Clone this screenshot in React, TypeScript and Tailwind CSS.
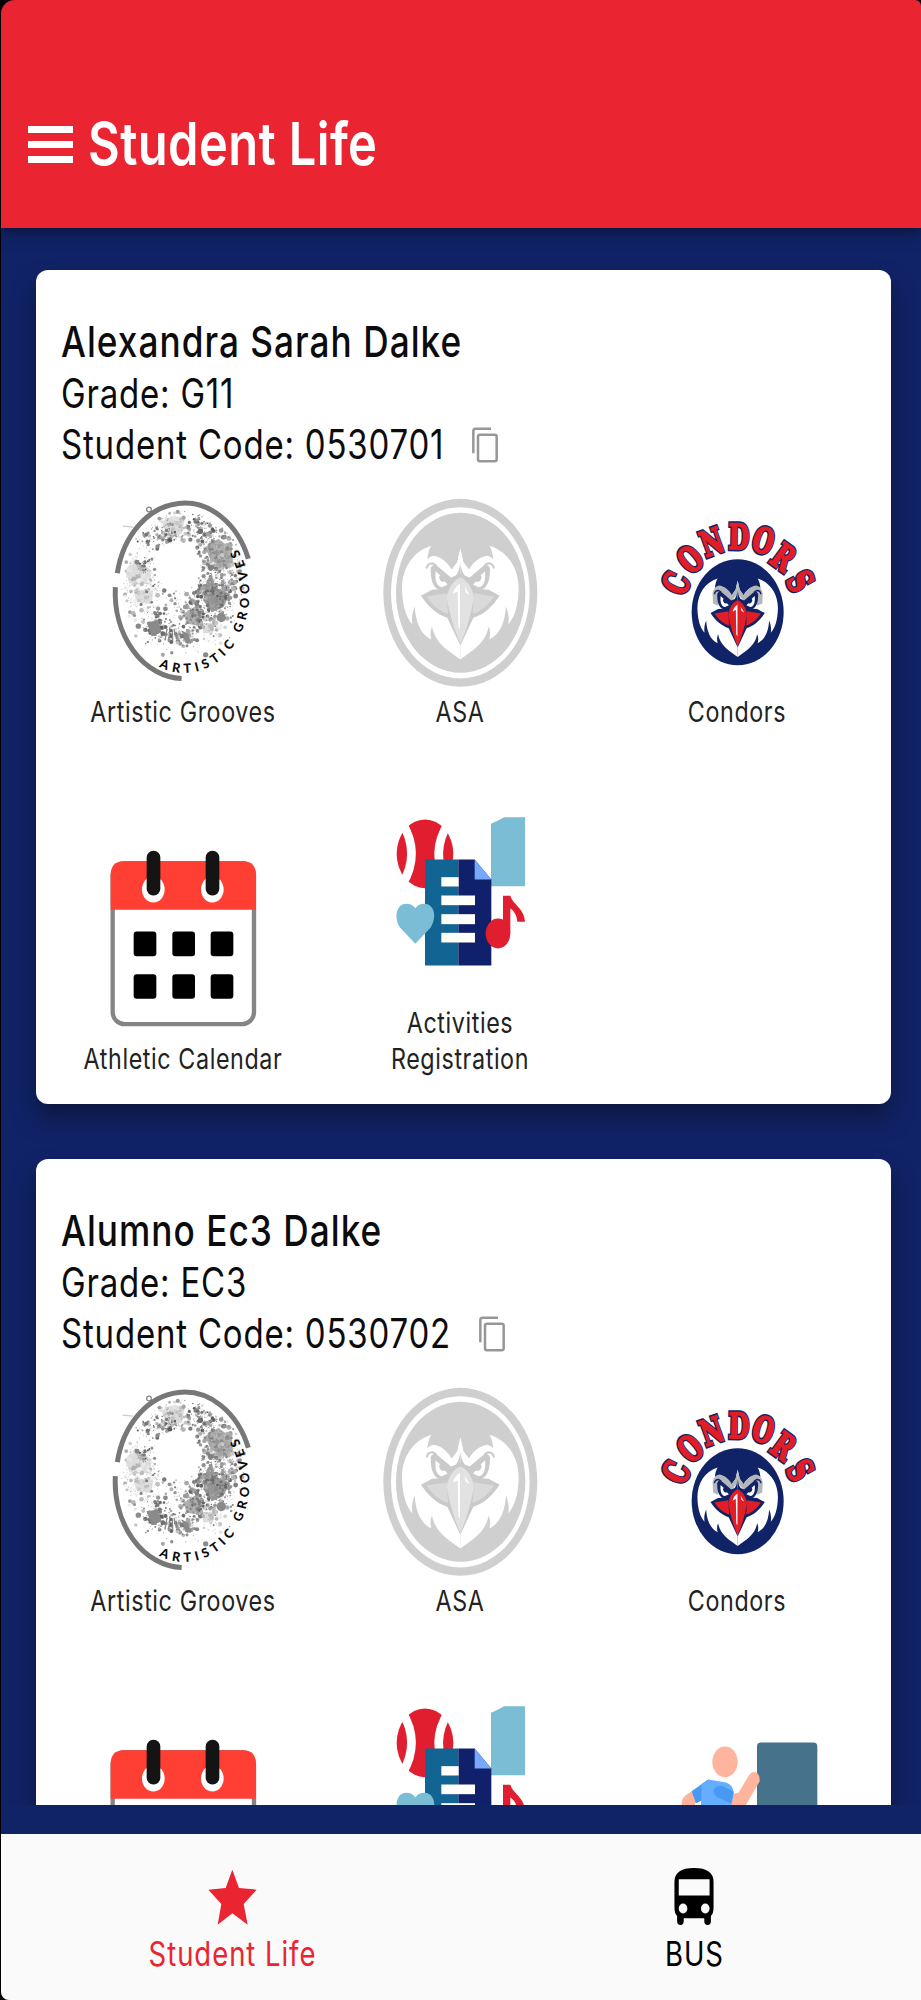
import React from 'react';

interface Activity {
  label: string[];
  icon: React.FC;
}

interface Student {
  name: string;
  grade: string;
  code: string;
  activities: Activity[];
}

interface CondorHeadProps {
  dark: string;
  brow: string;
  beak: string;
  beakSide: string;
}

const FACE_HALF =
  'M271 204 L262 245 L245 268 C232 245 212 228 190 232 L172 236 C174 222 176 208 184 196 C130 212 96 262 96 325 C97 375 108 410 127 432 C124 412 127 395 134 378 C137 425 152 462 184 477 C180 462 181 450 186 438 C196 490 235 510 271 537 Z';
const BROW_HALF = 'M271 204 L262 245 L245 268 C232 245 212 228 190 226 C174 230 164 244 162 262 L164 304 L186 314 L190 262 L243 296 L271 262 Z';
const EYE_HALF =
  'M182 264 C186 252 194 250 204 258 L243 291 L258 285 C266 274 269 262 271 246 L271 302 L234 332 L206 328 C186 318 182 292 182 264 Z';

const CondorHead: React.FC<CondorHeadProps> = ({ dark, brow, beak, beakSide }) => {
  const half = (
    <>
      <path d={FACE_HALF} fill="#fff" />
      <path d={BROW_HALF} fill={brow} />
      <path d={EYE_HALF} fill={dark} />
      <path d="M170 264 Q172 248 188 248 L200 256" fill="none" stroke={dark} strokeWidth="6" />
      <path d="M197 272 C194 296 199 318 216 320 L233 312 L224 303 C215 307 209 300 207 290 L210 284 Z" fill="#fff" />
      <path d="M153 346 L186 328 L235 325 L271 280 V496 L232 412 C200 402 174 378 153 346 Z" fill={dark} />
      <path d="M170 348 L230 338 L234 400 C206 392 186 372 170 348 Z" fill={beakSide} />
      <path d="M271.5 290 C252 298 236 318 230 350 C238 400 256 458 271.5 491 Z" fill={beak} />
    </>
  );
  return (
    <g>
      {half}
      <g transform="translate(542 0) scale(-1 1)">{half}</g>
      <path d="M270 310 C262 315 252 325 249 340 L263 332 L265 440 L270 446 Z" fill="#fff" />
      <path d="M284 318 L299 344 L287 336 Z" fill="#fff" />
    </g>
  );
};

// Paint splatter of the Artistic Grooves logo, seeded so it is always the same
const splatter = (() => {
  let seed = 11;
  const rand = () => {
    seed = (seed * 16807) % 2147483647;
    return seed / 2147483647;
  };
  const clusters = [
    { x: 140, y: 290, s: 70, n: 220, tone: 205 },
    { x: 155, y: 370, s: 60, n: 120, tone: 215 },
    { x: 245, y: 140, s: 60, n: 220, tone: 185 },
    { x: 355, y: 440, s: 50, n: 110, tone: 200 },
    { x: 385, y: 215, s: 70, n: 330, tone: 145 },
    { x: 400, y: 270, s: 55, n: 150, tone: 165 },
    { x: 375, y: 345, s: 65, n: 330, tone: 125 },
    { x: 310, y: 400, s: 55, n: 200, tone: 130 },
    { x: 200, y: 440, s: 45, n: 110, tone: 125 },
    { x: 240, y: 460, s: 32, n: 60, tone: 120 },
    { x: 290, y: 475, s: 30, n: 60, tone: 140 },
    { x: 165, y: 255, s: 26, n: 40, tone: 110 },
    { x: 202, y: 318, s: 20, n: 25, tone: 130 },
    { x: 175, y: 170, s: 38, n: 70, tone: 120 },
    { x: 235, y: 170, s: 40, n: 70, tone: 120 },
    { x: 340, y: 145, s: 45, n: 100, tone: 120 },
    { x: 290, y: 330, s: 210, n: 330, tone: 150 },
  ];
  const dots: { x: number; y: number; r: number; c: string }[] = [];
  clusters.forEach(k => {
    for (let i = 0; i < k.n; i++) {
      const x = k.x + (rand() + rand() - 1) * k.s * 1.15;
      const y = k.y + (rand() + rand() - 1) * k.s * 1.15;
      const r = 1 + Math.pow(rand(), 4) * 6.5;
      const t = Math.min(240, Math.round(k.tone + (rand() - 0.4) * 80));
      const hole = Math.pow((x - 262) / 66, 2) + Math.pow((y - 255) / 76, 2) < 1;
      const inside = Math.pow((x - 283) / 190, 2) + Math.pow((y - 330) / 240, 2) < 1;
      if (!hole && inside) dots.push({ x, y, r, c: `rgb(${t},${t},${t})` });
    }
  });
  return dots;
})();

const ArtisticGroovesIcon: React.FC = () => (
  <svg className="size-[200px]" viewBox="-21 40.5 600 600">
    <g fill="#dedede">
      <path d="M215 125 Q245 95 285 115 L275 160 L235 175 Z" />
      <path d="M105 270 L135 235 L185 270 L180 310 L120 315 Z" />
      <path d="M130 330 L190 325 L185 370 L140 365 Z" />
      <path d="M335 430 L375 425 L370 455 L340 460 Z" />
    </g>
    <g fill="#b0b0b0">
      <path d="M345 200 L385 175 L425 205 L430 250 L395 265 L360 235 Z" />
      <path d="M280 400 L320 375 L338 400 L325 435 L290 430 Z" />
    </g>
    <path d="M350 300 L365 280 L375 320 L420 340 L400 380 L365 395 L340 360 Z" fill="#989898" />
    {splatter.map((d, i) => (
      <circle key={i} cx={d.x} cy={d.y} r={d.r} fill={d.c} />
    ))}
    <g fill="#8a8a8a">
      <path d="M170 425 L205 420 L215 455 L185 468 Z" />
      <path d="M275 450 L295 460 L303 490 L288 487 Z" />
      <circle cx="394" cy="411" r="14" />
      <circle cx="347" cy="523" r="8" />
      <circle cx="145" cy="437" r="8" />
    </g>
    <circle cx="177" cy="87" r="7" fill="none" stroke="#888" strokeWidth="4" />
    <path d="M98 137 L130 140" stroke="#ccc" strokeWidth="4" />
    <path d="M225 480 L231 445 M236 485 L240 440 M248 482 L247 447 M260 475 L252 445" stroke="#888" strokeWidth="4" />
    <path d="M82 278 A205 259 0 0 1 475 235" fill="none" stroke="#777" strokeWidth="15" />
    <path d="M76 320 A206 258 0 0 0 275 594" fill="none" stroke="#777" strokeWidth="15" />
    <path id="grooves-arc" d="M206.8 558.2 A195 237 0 0 0 436.7 194" fill="none" />
    <text className="font-['Lato'] font-black" fontSize="38" fill="#0b0b0b">
      <textPath href="#grooves-arc" textLength="560">
        ARTISTIC GROOVES
      </textPath>
    </text>
  </svg>
);

const AsaIcon: React.FC = () => (
  <svg className="size-[200px]" viewBox="-30 40.5 600 600">
    <ellipse cx="271" cy="337" rx="231" ry="282" fill="#cfcfcf" />
    <ellipse cx="271" cy="337" rx="208" ry="257" fill="#fff" />
    <ellipse cx="272" cy="337" rx="194" ry="240" fill="#cfcfcf" />
    <CondorHead dark="#cacaca" brow="#fff" beak="#e2e2e2" beakSide="#dadada" />
  </svg>
);

const condorsLetters = [
  { ch: 'C', x: 107, y: 248, r: -64 },
  { ch: 'O', x: 150, y: 176, r: -41 },
  { ch: 'N', x: 215, y: 124, r: -20 },
  { ch: 'D', x: 296, y: 108, r: 1 },
  { ch: 'O', x: 370, y: 120, r: 17 },
  { ch: 'R', x: 430, y: 170, r: 36 },
  { ch: 'S', x: 481, y: 242, r: 60 },
];

const CondorsIcon: React.FC = () => (
  <svg className="size-[200px]" viewBox="-9 -19.5 600 600">
    {condorsLetters.map((l, i) => (
      <g
        key={i}
        className="font-['DejaVu_Serif'] font-bold"
        transform={`translate(${l.x} ${l.y}) rotate(${l.r}) scale(0.68 1)`}
        fontSize="105"
        textAnchor="middle"
      >
        <text y="38" fill="#e11d26" stroke="#112367" strokeWidth="14" paintOrder="stroke">
          {l.ch}
        </text>
        <text y="38" fill="#e11d26" stroke="#e11d26" strokeWidth="5" aria-hidden="true">
          {l.ch}
        </text>
      </g>
    ))}
    <ellipse cx="293" cy="335" rx="138" ry="159" fill="#112367" />
    <g transform="translate(106 99) scale(0.69)">
      <CondorHead dark="#112367" brow="#b3b6bb" beak="#e11d26" beakSide="#e11d26" />
    </g>
  </svg>
);

const CalendarIcon: React.FC = () => (
  <svg className="size-[200px]" viewBox="39 31.5 600 600">
    <rect x="128" y="98" width="424" height="483" rx="36" fill="#fff" stroke="#858585" strokeWidth="13" />
    <path d="M122 238 V135 Q122 92 160 92 H520 Q558 92 558 135 V238 Z" fill="#ff3f34" />
    {[250, 427].map(x => (
      <g key={x}>
        <ellipse cx={x} cy="177" rx="34" ry="39" fill="#fff" />
        <rect x={x - 20} y="61" width="41" height="134" rx="20" fill="#141414" />
      </g>
    ))}
    {[303, 431].map(y =>
      [191, 307, 422].map(x => <rect key={`${x}-${y}`} x={x} y={y} width="68" height="74" rx="9" fill="#000" />)
    )}
  </svg>
);

const RegistrationIcon: React.FC = () => (
  <svg className="size-[200px]" viewBox="-30 13.5 600 600">
    <ellipse cx="165" cy="160" rx="85" ry="103" fill="#e01e2f" />
    <path d="M96 66 Q152 158 98 250" fill="none" stroke="#fff" strokeWidth="26" />
    <path d="M236 66 Q178 158 232 250" fill="none" stroke="#fff" strokeWidth="26" />
    <path d="M363 70 Q385 60 402 50 H465 V257 H363 Z" fill="#7abdd5" />
    <rect x="165" y="177" width="100" height="318" fill="#126493" />
    <path d="M265 177 H314 L364 237 V495 H265 Z" fill="#11206a" />
    <path d="M314 177 L364 237 H314 Z" fill="#78a8fb" />
    <rect x="214" y="230" width="52" height="28" fill="#fffef8" />
    <rect x="214" y="285" width="101" height="29" fill="#fffef8" />
    <rect x="214" y="341" width="101" height="30" fill="#fffef8" />
    <rect x="214" y="397" width="101" height="29" fill="#fffef8" />
    <path d="M136 430 L90 381 C70 350 80 310 109 310 Q126 310 136 323 Q146 310 163 310 C193 310 202 350 182 381 Z" fill="#7abdd5" />
    <path d="M399 286 H421 C428 312 464 325 465 364 H442 C440 340 430 330 421 324 V398 H399 Z" fill="#e01e2f" />
    <ellipse cx="384" cy="399" rx="37" ry="45" fill="#e01e2f" />
  </svg>
);

const CounselorIcon: React.FC = () => (
  <svg className="size-[200px]" viewBox="-9 -19.5 600 600">
    <rect x="351" y="126" width="181" height="300" rx="12" fill="#46738b" />
    <ellipse cx="255" cy="184" rx="38" ry="46" fill="#feb49d" />
    <path d="M156 272 Q125 288 125 305 V400 H165 V310 L185 290 Z" fill="#feb49d" />
    <path d="M272 282 L296 276 L326 226 Q334 212 347 215 Q360 220 359 242 L314 320 H270 Z" fill="#feb49d" />
    <path d="M205 237 L155 272 L168 308 L190 298 Z" fill="#4799f4" />
    <path d="M185 250 L205 237 L258 246 Q282 254 281 280 L273 320 V400 H180 Z" fill="#65adfe" />
    <path d="M281 274 L273 309 L232 290 Q217 280 223 264 Q231 252 248 257 Z" fill="#4799f4" />
  </svg>
);

const CopyIcon: React.FC = () => (
  <svg className="h-[36px] w-[26px]" viewBox="0 0 78 108" fill="none" stroke="#979797" strokeWidth="7.5">
    <path d="M4 79 V12 Q4 5 11 5 H57" />
    <rect x="18" y="23" width="56" height="80" rx="6" />
  </svg>
);

const artistic = { label: ['Artistic Grooves'], icon: ArtisticGroovesIcon };
const asa = { label: ['ASA'], icon: AsaIcon };
const condors = { label: ['Condors'], icon: CondorsIcon };
const calendar = { label: ['Athletic Calendar'], icon: CalendarIcon };
const registration = { label: ['Activities', 'Registration'], icon: RegistrationIcon };
const counselor = { label: ['', ''], icon: CounselorIcon };

const students: Student[] = [
  {
    name: 'Alexandra Sarah Dalke',
    grade: 'G11',
    code: '0530701',
    activities: [artistic, asa, condors, calendar, registration],
  },
  {
    name: 'Alumno Ec3 Dalke',
    grade: 'EC3',
    code: '0530702',
    activities: [artistic, asa, condors, calendar, registration, counselor],
  },
];

const StudentCard: React.FC<{ student: Student }> = ({ student }) => (
  <div className="ml-[35px] h-[834px] w-[855px] shrink-0 rounded-xl bg-white pt-[46px] shadow-[0_14px_22px_rgba(10,16,40,0.6)]">
    <div className="pl-[25px] whitespace-nowrap text-[#0c0c0c]">
      <h2 className="mb-px scale-y-[1.22] text-[35.2px] leading-[51px] font-medium tracking-[1.03px]">{student.name}</h2>
      <p className="scale-y-[1.22] text-[33px] leading-[51px] tracking-[0.8px]">Grade: {student.grade}</p>
      <div className="flex items-center">
        <p className="scale-y-[1.22] text-[33px] leading-[51px] tracking-[0.8px]">Student Code: {student.code}</p>
        <button className="ml-[28px]">
          <CopyIcon />
        </button>
      </div>
    </div>
    <div className="ml-[8px] grid w-[831px] grid-cols-3 grid-rows-[260px_347px]">
      {student.activities.map((activity, index) => {
        const Icon = activity.icon;
        return (
          <div key={index} className="flex flex-col items-center justify-end">
            <Icon />
            {activity.label.map((line, i) => (
              <p
                key={i}
                className="h-[36px] scale-y-[1.22] pl-px text-center text-[23.3px] leading-[36px] tracking-[0.6px] text-[#222]"
              >
                {line}
              </p>
            ))}
          </div>
        );
      })}
    </div>
  </div>
);

const App: React.FC = () => {
  return (
    <div className="h-[2000px] w-[921px] overflow-hidden bg-black pl-px font-['Inter',sans-serif]">
      <div className="flex h-full flex-col overflow-hidden rounded-tl-[14px] rounded-tr-[6px] rounded-bl-[8px] bg-[#112367]">
        <header className="z-10 flex h-[228px] shrink-0 items-center bg-[#ea2431] pt-[60px] pl-[27px] shadow-[0_4px_14px_rgba(10,16,40,0.7)]">
          <button className="flex w-[45px] flex-col gap-2">
            <span className="h-[7px] bg-white" />
            <span className="h-[7px] bg-white" />
            <span className="h-[7px] bg-white" />
          </button>
          <h1 className="ml-[15px] scale-y-[1.22] text-[48.8px] leading-none font-semibold tracking-[0.4px] whitespace-nowrap text-white">
            Student Life
          </h1>
        </header>

        <main className="mb-[29px] flex min-h-0 flex-1 flex-col gap-[55px] overflow-hidden pt-[42px]">
          {students.map(student => (
            <StudentCard key={student.code} student={student} />
          ))}
        </main>

        <nav className="grid h-[166px] w-[924px] shrink-0 grid-cols-2 bg-[#fafafa] pt-[34px]">
          <a className="flex flex-col items-center text-[#ea2431]">
            <svg className="h-[57px] w-[49px]" viewBox="624 442 147 171" fill="currentColor">
              <path d="M697 447 L717 502 L770 507 L731 550 L743 612 L697 578 L653 612 L664 550 L625 507 L677 502 Z" />
            </svg>
            <span className="mt-[9px] scale-y-[1.22] pl-px text-[27.5px] leading-[40px] tracking-[0.95px]">
              Student Life
            </span>
          </a>
          <a className="flex flex-col items-center text-black">
            <svg className="h-[57px] w-[40px]" viewBox="104 503 120 172" fill="currentColor">
              <path
                fillRule="evenodd"
                d="M105 545 Q105 503 164 503 Q223 503 223 545 V622 Q223 640 215 648 V663 Q215 675 205 675 Q195 675 195 663 V655 H133 V663 Q133 675 123 675 Q113 675 113 663 V648 Q105 640 105 622 Z M118 537 V586 H211 V537 Z M118 625 A13 15 0 0 0 144 625 A13 15 0 0 0 118 625 Z M185 625 A13 15 0 0 0 211 625 A13 15 0 0 0 185 625 Z"
              />
            </svg>
            <span className="mt-[9px] scale-y-[1.22] pl-px text-[27.5px] leading-[40px] tracking-[0.95px]">BUS</span>
          </a>
        </nav>
      </div>
    </div>
  );
};

export default App;
